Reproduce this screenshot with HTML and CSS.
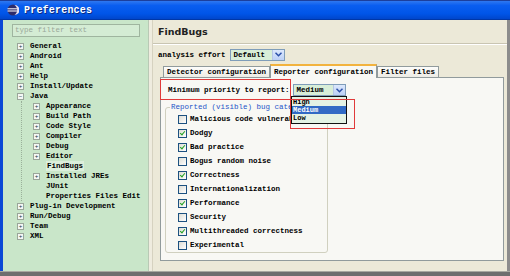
FILE: index.html
```html
<!DOCTYPE html>
<html lang="en">
<head>
  <meta charset="UTF-8" />
  <title>Preferences</title>
  <link rel="stylesheet" href="styles.css">
</head>
<body>
  <div class="window">
    <div class="titlebar">
      <svg class="app-icon" width="12" height="12" viewBox="0 0 12 12">
        <circle cx="6" cy="6" r="5.5" fill="#2c2a6a"/>
        <rect x="0.5" y="4.3" width="11" height="1" fill="#fff"/>
        <rect x="0.5" y="6.5" width="11" height="1" fill="#fff"/>
        <path d="M7.5 1 A5 5 0 0 1 7.5 11 A6 6 0 0 0 7.5 1z" fill="#e8e0f0"/>
      </svg>
      <span class="title">Preferences</span>
    </div>

    <div class="main">
      <div class="left">
        <div class="filter">type filter text</div>
        <ul class="tree">
          <li><span class="exp">+</span>General</li>
          <li><span class="exp">+</span>Android</li>
          <li><span class="exp">+</span>Ant</li>
          <li><span class="exp">+</span>Help</li>
          <li><span class="exp">+</span>Install/Update</li>
          <li><span class="exp">&minus;</span>Java</li>
          <li class="children">
            <ul>
              <li><span class="exp">+</span>Appearance</li>
              <li><span class="exp">+</span>Build Path</li>
              <li><span class="exp">+</span>Code Style</li>
              <li><span class="exp">+</span>Compiler</li>
              <li><span class="exp">+</span>Debug</li>
              <li><span class="exp">+</span>Editor</li>
              <li><span class="noexp"></span><span class="current">FindBugs</span></li>
              <li><span class="exp">+</span>Installed JREs</li>
              <li><span class="noexp"></span>JUnit</li>
              <li><span class="noexp"></span>Properties Files Edit</li>
            </ul>
          </li>
          <li><span class="exp">+</span>Plug-in Development</li>
          <li><span class="exp">+</span>Run/Debug</li>
          <li><span class="exp">+</span>Team</li>
          <li><span class="exp">+</span>XML</li>
        </ul>
      </div>

      <div class="sash"></div>

      <div class="right">
        <div class="page-header">FindBugs</div>

        <div class="effort-row">
          <span>analysis effort</span>
          <div class="combo combo-effort">
            <span class="combo-text">Default</span>
            <span class="combo-btn"><svg width="7" height="5" viewBox="0 0 7 5"><path d="M0.5 0.8 L3.5 3.8 L6.5 0.8" fill="none" stroke="#2a4fa8" stroke-width="1.5"/></svg></span>
          </div>
        </div>

        <div class="tabs">
          <div class="tab">Detector configuration</div>
          <div class="tab selected">Reporter configuration</div>
          <div class="tab">Filter files</div>
        </div>

        <div class="pane">
          <div class="priority-row">
            <span>Minimum priority to report:</span>
            <div class="combo combo-priority">
              <span class="combo-text">Medium</span>
              <span class="combo-btn"><svg width="7" height="5" viewBox="0 0 7 5"><path d="M0.5 0.8 L3.5 3.8 L6.5 0.8" fill="none" stroke="#2a4fa8" stroke-width="1.5"/></svg></span>
            </div>
          </div>

          <fieldset class="group">
            <legend>Reported (visible) bug categories</legend>
            <div class="check"><span class="box"></span>Malicious code vulnerability</div>
            <div class="check"><span class="box on"></span>Dodgy</div>
            <div class="check"><span class="box on"></span>Bad practice</div>
            <div class="check"><span class="box"></span>Bogus random noise</div>
            <div class="check"><span class="box on"></span>Correctness</div>
            <div class="check"><span class="box"></span>Internationalization</div>
            <div class="check"><span class="box on"></span>Performance</div>
            <div class="check"><span class="box"></span>Security</div>
            <div class="check"><span class="box on"></span>Multithreaded correctness</div>
            <div class="check"><span class="box"></span>Experimental</div>
          </fieldset>
        </div>
      </div>
    </div>

    <div class="bottom"></div>

    <!-- open combo list and the red marks drawn over the screenshot -->
    <ul class="dropdown">
      <li>High</li>
      <li class="hl">Medium</li>
      <li>Low</li>
    </ul>
    <div class="mark mark-label"></div>
    <div class="mark mark-list"></div>
  </div>
</body>
</html>
```

FILE: styles.css
```css
body {
  margin: 0;
  padding: 0;
  background-color: #ece9d8;
  font-family: "Liberation Mono", "DejaVu Sans Mono", monospace;
  font-size: 7.5px;
  font-weight: bold;
  color: #000;
  overflow: hidden;
}

ul {
  list-style: none;
  margin: 0;
  padding: 0;
}

.window {
  position: relative;
  width: 510px;
  height: 276px;
  display: flex;
  flex-direction: column;
  overflow: hidden;
}

.titlebar {
  height: 20px;
  flex-shrink: 0;
  display: flex;
  align-items: center;
  gap: 5px;
  padding-left: 7px;
  background: linear-gradient(#2f78f0 0%, #0a5ef0 25%, #0055e8 70%, #0046cc 100%);
  border-top: 1px solid #1c3f9c;
  border-bottom: 1px solid #0037a8;
  box-sizing: border-box;
}

.title {
  font-family: "Liberation Mono", monospace;
  font-weight: bold;
  font-size: 10px;
  letter-spacing: 0.2px;
  color: #fff;
  text-shadow: 1px 1px 0 #0a2a80;
}

.main {
  flex: 1;
  display: flex;
  min-height: 0;
}

.left {
  width: 145px;
  flex-shrink: 0;
  border-left: 3px solid #0a48d6;
  background-color: #c9e6c9;
  padding-top: 4px;
}

.filter {
  height: 11px;
  margin: 0 8px 0 9px;
  border: 1px solid #9fb59f;
  background-color: #d4ecd4;
  color: #9aa89a;
  font-weight: normal;
  line-height: 11px;
  padding-left: 2px;
}

.tree {
  margin-top: 4px;
}

.tree li {
  height: 10px;
  line-height: 10px;
  display: flex;
  align-items: center;
  gap: 6px;
  padding-left: 14px;
  white-space: nowrap;
}

.tree li.children {
  height: auto;
  display: block;
  padding-left: 0;
  margin-left: 18px;
  border-left: 1px dotted #9ab09a;
}

.tree li.children li {
  padding-left: 11px;
}

.exp {
  width: 5px;
  height: 5px;
  border: 1px solid #9aa69a;
  background-color: #f4f8f4;
  font-size: 6px;
  font-weight: normal;
  line-height: 5px;
  text-align: center;
  color: #234;
  flex-shrink: 0;
}

.noexp {
  width: 7px;
  flex-shrink: 0;
}

.current {
  background-color: #dcefdc;
  padding: 0 1px;
}

.sash {
  width: 3px;
  flex-shrink: 0;
  background-color: #efecdf;
  border-left: 1px solid #b9c9b5;
  border-right: 1px solid #d6d2c0;
}

.right {
  flex: 1;
  display: flex;
  flex-direction: column;
  border-right: 3px solid #8c8c8c;
}

.page-header {
  height: 23px;
  flex-shrink: 0;
  padding-left: 5px;
  display: flex;
  align-items: center;
  font-family: "DejaVu Sans", Verdana, sans-serif;
  font-weight: bold;
  font-size: 9.5px;
  color: #222;
  border-bottom: 1px solid #c9c5b2;
  box-shadow: 0 1px 0 #fff;
}

.effort-row {
  margin-top: 4px;
  height: 13px;
  padding-left: 5px;
  display: flex;
  align-items: center;
  gap: 4px;
}

.combo {
  display: flex;
  align-items: center;
  height: 12px;
  border: 1px solid #7f9db9;
  background-color: #d8eed8;
  box-sizing: border-box;
}

.combo-text {
  flex: 1;
  padding-left: 3px;
}

.combo-btn {
  width: 11px;
  height: 10px;
  display: flex;
  align-items: center;
  justify-content: center;
  background: linear-gradient(#dce8fc, #bcd0f6);
  border-left: 1px solid #b6c6e6;
}

.combo-effort {
  width: 55px;
}

.combo-priority {
  width: 53px;
}

.tabs {
  margin-top: 3px;
  padding-left: 10px;
  display: flex;
  align-items: flex-end;
  height: 13px;
}

.tab {
  height: 10px;
  line-height: 10px;
  padding: 0 3px;
  border: 1px solid #919b9c;
  border-bottom: none;
  background: linear-gradient(#fdfdfb, #ecebe4);
}

.tab.selected {
  height: 12px;
  line-height: 12px;
  background-color: #f8f8f4;
  background-image: none;
  border-top: 2px solid #f2b33e;
  border-left: 1px solid #919b9c;
  margin-bottom: -1px;
  position: relative;
}

.pane {
  flex: 1;
  margin: 0 3px 10px 7px;
  background-color: #f8f8f4;
  border: 1px solid #919b9c;
  padding-top: 6px;
}

.priority-row {
  height: 12px;
  padding-left: 7px;
  display: flex;
  align-items: center;
  gap: 3px;
}

.group {
  width: 149px;
  margin: 7px 0 0 4px;
  padding: 1px 0 0 12px;
  border: 1px solid #d0d0bf;
  border-radius: 3px;
}

.group legend {
  color: #1f55c8;
  font-weight: normal;
  padding: 0 1px;
  margin-left: -8px;
  white-space: nowrap;
}

.check {
  height: 14px;
  display: flex;
  align-items: center;
  gap: 3px;
  white-space: nowrap;
}

.box {
  position: relative;
  width: 7px;
  height: 7px;
  border: 1px solid #1c5180;
  background: linear-gradient(135deg, #dcdcd4, #ffffff);
  flex-shrink: 0;
}

.box.on::after {
  content: "";
  position: absolute;
  left: 2px;
  top: 0;
  width: 2px;
  height: 4px;
  border-right: 1.5px solid #21a121;
  border-bottom: 1.5px solid #21a121;
  transform: rotate(40deg);
}

.bottom {
  height: 4px;
  flex-shrink: 0;
  background-color: #6e6e6e;
  border-top: 1px solid #a8a8a0;
}

.dropdown {
  position: absolute;
  left: 291px;
  top: 96px;
  width: 54px;
  padding: 1px 0;
  border: 1px solid #111;
  background-color: #e4f2e4;
  font-size: 7px;
}

.dropdown li {
  height: 8px;
  line-height: 8px;
  padding-left: 1px;
}

.dropdown li.hl {
  background-color: #316ac5;
  color: #fff;
}

.mark {
  position: absolute;
  border: 1px solid #e03a3a;
}

.mark-label {
  left: 160px;
  top: 79px;
  width: 129px;
  height: 19px;
}

.mark-list {
  left: 290px;
  top: 99px;
  width: 63px;
  height: 28px;
}
```
